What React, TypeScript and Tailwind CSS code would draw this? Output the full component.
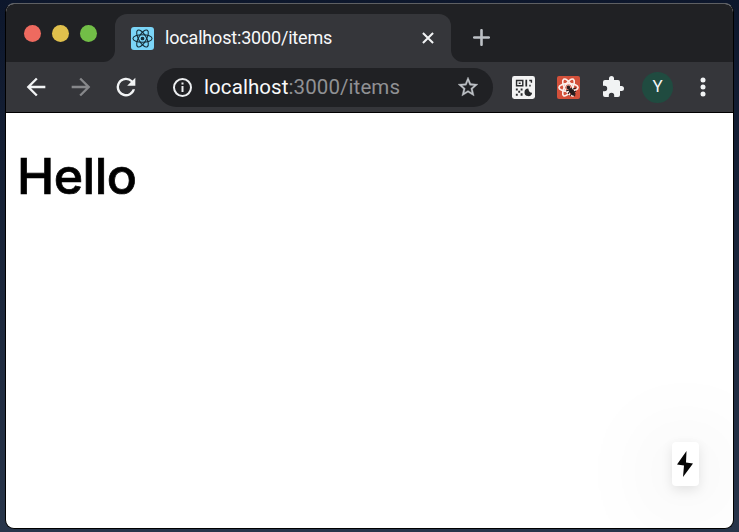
import React from 'react';

function Atom({ color, className, width = 1.3 }: { color: string; className: string; width?: number }) {
  return (
    <svg viewBox="0 0 24 24" className={className} fill="none" stroke={color} strokeWidth={width}>
      <ellipse cx="12" cy="12" rx="10" ry="4" />
      <ellipse cx="12" cy="12" rx="10" ry="4" transform="rotate(60 12 12)" />
      <ellipse cx="12" cy="12" rx="10" ry="4" transform="rotate(120 12 12)" />
      <circle cx="12" cy="12" r="1.4" fill={color} />
    </svg>
  );
}

function TabStrip() {
  return (
    <div className="flex h-[58px] shrink-0 bg-[#202124] pt-[10px]">
      <div className="flex w-[109px] gap-[11px] pl-[18px] pt-[11px]">
        <span className="size-[17px] rounded-full bg-[#ee6a5f]" />
        <span className="size-[17px] rounded-full bg-[#e0c04c]" />
        <span className="size-[17px] rounded-full bg-[#72be47]" />
      </div>
      <div className="-ml-[12px] flex h-12 items-end">
        <svg className="size-3" viewBox="0 0 12 12"><path d="M12 0v12H0A12 12 0 0 0 12 0" fill="#35363a" /></svg>
        <div className="flex h-12 w-[336px] items-center rounded-t-[12px] bg-[#35363a] pl-4 pr-[17px]">
          <div className="size-[23px] rounded-[3px] bg-[#7bd5f7]"><Atom color="#142b35" className="size-[23px]" width={1.1} /></div>
          <span className="ml-[11px] font-['Roboto',sans-serif] text-[18px] leading-6 tracking-[-0.18px] text-[#f8f9fa]">localhost:3000/items</span>
          <svg className="ml-auto size-[12px]" viewBox="0 0 13 13" stroke="#f1f3f4" strokeWidth="2.2"><path d="M1 1l11 11M12 1L1 12" /></svg>
        </div>
        <svg className="size-3" viewBox="0 0 12 12"><path d="M0 0v12h12A12 12 0 0 1 0 0" fill="#35363a" /></svg>
      </div>
      <svg className="ml-[10px] mt-[15px] size-[17px]" viewBox="0 0 17 17" stroke="#bdc1c6" strokeWidth="2.6" strokeLinecap="round"><path d="M8.5 1.2v14.6M1.2 8.5h14.6" /></svg>
    </div>
  );
}

function QrIcon() {
  return (
    <svg viewBox="0 0 24 24" className="size-[23px] shrink-0">
      <rect width="24" height="24" rx="2.5" fill="#f3f3f3" />
      <g fill="#292a2c">
        <path fillRule="evenodd" d="M4 4h8v7H4zM5.5 5.5v4h5v-4z" />
        <path d="M7 6.8h2v1.5H7zM14 4h1.8v7H14zM18 4h3v3h-1.5V5.5H18zM18 9h1.5v2H18zM4 13h2v2H4zM9 13h2v2H9zM6.5 15.5h2v2h-2zM4 18.5h2v2H4zM9 18h2v2.5H9z" />
        <path d="M17 13a4 4 0 1 0 4 4.5c-2 .2-3.7-1.5-4-4.5" />
      </g>
    </svg>
  );
}

function DevtoolsIcon() {
  return (
    <div className="relative size-[23px] shrink-0 rounded-[2px] bg-[#d3503a]">
      <Atom color="#fbeeea" className="size-[23px]" width={1.7} />
      <svg viewBox="0 0 12 12" className="absolute left-[8px] top-[9px] size-3" stroke="#251b1c" strokeWidth="1.2" fill="#251b1c">
        <circle cx="3.4" cy="2.4" r="1.2" />
        <path d="M4 4l4 1 2 4-2 1-3-3z" />
        <path d="M1 6l3-1 3-2M3 9l2-3M5 11l2-3M8 4l3-1M9 7l2-1M10 11L8 9" fill="none" />
      </svg>
    </div>
  );
}

function Toolbar() {
  return (
    <div className="flex h-[51px] shrink-0 items-center border-b border-black bg-[#35363a]">
      <svg className="ml-4 size-7 shrink-0" viewBox="0 0 24 24" fill="#f1f3f4"><path d="M20 11H7.83l5.59-5.59L12 4l-8 8 8 8 1.41-1.41L7.83 13H20z" /></svg>
      <svg className="ml-[17px] size-7 shrink-0" viewBox="0 0 24 24" fill="#86878a"><path d="M12 4l-1.41 1.41L16.17 11H4v2h12.17l-5.58 5.59L12 20l8-8z" /></svg>
      <svg className="ml-[17px] size-7 shrink-0" viewBox="0 0 24 24" fill="#f1f3f4"><path d="M17.65 6.35A8 8 0 1 0 19.73 14h-2.08A6 6 0 1 1 12 6c1.66 0 3.14.69 4.22 1.78L13 11h7V4z" /></svg>
      <div className="ml-[17px] flex h-[39px] w-[336px] shrink-0 items-center rounded-full bg-[#202124] pl-[15px] pr-[13px]">
        <svg className="size-[21px]" viewBox="0 0 21 21" fill="none" stroke="#eceef0" strokeWidth="2"><circle cx="10.5" cy="10.5" r="8.5" /><path d="M10.5 9v6M10.5 5.5v2" /></svg>
        <span className="ml-[11px] font-['Roboto',sans-serif] text-[20.5px] leading-6 tracking-[0.08px] text-[#909194]"><span className="text-[#f8f9fa]">localhost</span>:3000/items</span>
        <svg className="ml-auto size-6" viewBox="0 0 24 24" fill="#bdc1c6" stroke="#bdc1c6" strokeWidth="0.3"><path d="M22 9.24l-7.19-.62L12 2 9.19 8.63 2 9.24l5.46 4.73L5.82 21 12 17.27 18.18 21l-1.63-7.03zM12 15.4l-3.76 2.27 1-4.28-3.32-2.88 4.38-.38L12 6.1l1.71 4.04 4.38.38-3.32 2.88 1 4.28z" /></svg>
      </div>
      <div className="ml-[19px] flex items-center gap-[22px]"><QrIcon /><DevtoolsIcon />
        <svg className="-ml-px size-6 shrink-0" viewBox="0 0 24 24" fill="#f1f3f4"><path d="M20.5 11H19V7a2 2 0 0 0-2-2h-4V3.5a2.5 2.5 0 0 0-5 0V5H4a2 2 0 0 0-2 2v3.8h1.5a2.7 2.7 0 0 1 0 5.4H2V20a2 2 0 0 0 2 2h3.8v-1.5a2.7 2.7 0 0 1 5.4 0V22H17a2 2 0 0 0 2-2v-4h1.5a2.5 2.5 0 0 0 0-5" /></svg>
      </div>
      <div className="ml-[17px] flex size-[31px] items-center justify-center rounded-full bg-[#204b40] font-['Roboto',sans-serif] text-[17px] text-[#f4f5f6]">Y</div>
      <svg className="ml-[27px] h-5 w-[6px]" viewBox="0 0 6 20" fill="#f1f3f4"><circle cx="3" cy="3" r="2.5" /><circle cx="3" cy="10" r="2.5" /><circle cx="3" cy="17" r="2.5" /></svg>
    </div>
  );
}

export default function App() {
  return (
    <div className="h-[532px] w-[739px] overflow-hidden bg-gradient-to-b from-[#0d172c] to-[#28354a] pl-[5px] pt-[3px]">
      <div className="flex h-[526px] w-[729px] flex-col overflow-hidden rounded-[9px] border border-black border-t-[#5e6063] bg-white">
        <TabStrip />
        <Toolbar />
        <main className="flex flex-1 flex-col justify-between">
          <h1 className="ml-[11px] mt-[32px] font-['Inter',sans-serif] text-[50px] font-medium leading-[62px] tracking-[-0.5px] text-black [-webkit-text-stroke:0.7px_#000]">Hello</h1>
          <div className="mb-[42px] mr-[34px] flex h-[44px] w-[27px] items-center justify-center self-end rounded-[4px] bg-white pr-px shadow-[0_4px_12px_rgba(0,0,0,0.1),0_8px_90px_rgba(0,0,0,0.22)]">
            <svg className="h-[26px] w-4" viewBox="0 0 16 26"><path d="M9.5 0L0 13.5l7 1L6 26l10-13.5-7-1z" fill="#050505" /></svg>
          </div>
        </main>
      </div>
    </div>
  );
}
